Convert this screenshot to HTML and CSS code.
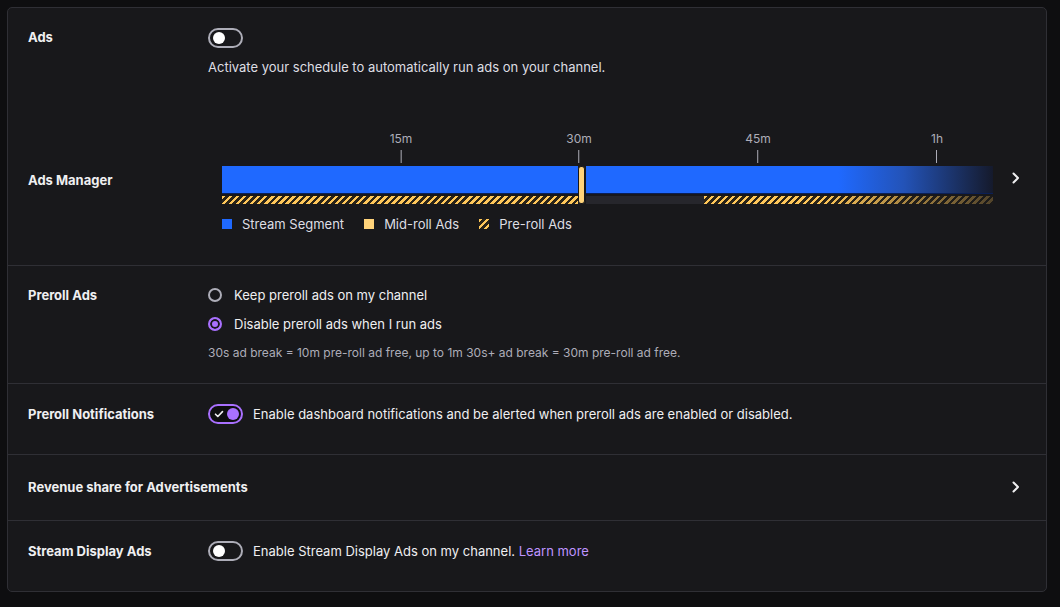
FILE: index.html
```html
<!DOCTYPE html>
<html lang="en">
<head>
    <meta charset="UTF-8">
    <meta name="viewport" content="width=device-width, initial-scale=1.0">
    <title>Ads Settings</title>
    <link rel="stylesheet" href="styles.css">
</head>
<body>
    <div class="panel">
        <div class="row row-ads">
            <div class="sub-row">
                <div class="label">Ads</div>
                <div class="content">
                    <div class="toggle"><span class="knob"></span></div>
                    <div class="desc">Activate your schedule to automatically run ads on your channel.</div>
                </div>
            </div>

            <div class="sub-row manager">
                <div class="label manager-label">Ads Manager</div>
                <div class="timeline">
                    <div class="scale">
                        <div class="tick" style="left: 179px;"><span>15m</span><i></i></div>
                        <div class="tick" style="left: 357px;"><span>30m</span><i></i></div>
                        <div class="tick" style="left: 536px;"><span>45m</span><i></i></div>
                        <div class="tick" style="left: 715px;"><span>1h</span><i></i></div>
                    </div>
                    <div class="track">
                        <div class="segments">
                            <div class="seg seg-a"></div>
                            <div class="seg seg-b"></div>
                        </div>
                        <div class="preroll">
                            <div class="stripes stripes-a"></div>
                            <div class="gap-track"></div>
                            <div class="stripes stripes-b"></div>
                        </div>
                        <div class="midroll"></div>
                    </div>
                    <div class="legend">
                        <div class="legend-item"><span class="swatch blue"></span>Stream Segment</div>
                        <div class="legend-item"><span class="swatch yellow"></span>Mid-roll Ads</div>
                        <div class="legend-item"><span class="swatch striped"></span>Pre-roll Ads</div>
                    </div>
                </div>
                <div class="chevron manager-chevron">
                    <svg width="20" height="20" viewBox="0 0 20 20"><path d="M7.5 5.5l4.5 4.5-4.5 4.5" fill="none" stroke="#efeff1" stroke-width="2" stroke-linecap="round" stroke-linejoin="round"/></svg>
                </div>
            </div>
        </div>

        <div class="row row-preroll">
            <div class="label">Preroll Ads</div>
            <div class="content">
                <div class="radio-group">
                    <div class="radio-item"><span class="radio"></span>Keep preroll ads on my channel</div>
                    <div class="radio-item"><span class="radio checked"></span>Disable preroll ads when I run ads</div>
                </div>
                <div class="note">30s ad break = 10m pre-roll ad free, up to 1m 30s+ ad break = 30m pre-roll ad free.</div>
            </div>
        </div>

        <div class="row row-inline">
            <div class="label">Preroll Notifications</div>
            <div class="content inline">
                <div class="toggle on">
                    <svg class="check" width="10" height="10" viewBox="0 0 10 10"><path d="M1.5 5.2l2.3 2.3 4.7-4.9" fill="none" stroke="#efeff1" stroke-width="1.6" stroke-linecap="round" stroke-linejoin="round"/></svg>
                    <span class="knob"></span>
                </div>
                <span class="text">Enable dashboard notifications and be alerted when preroll ads are enabled or disabled.</span>
            </div>
        </div>

        <div class="row row-link">
            <div class="label wide">Revenue share for Advertisements</div>
            <div class="chevron">
                <svg width="20" height="20" viewBox="0 0 20 20"><path d="M7.5 5.5l4.5 4.5-4.5 4.5" fill="none" stroke="#efeff1" stroke-width="2" stroke-linecap="round" stroke-linejoin="round"/></svg>
            </div>
        </div>

        <div class="row row-inline">
            <div class="label">Stream Display Ads</div>
            <div class="content inline">
                <div class="toggle"><span class="knob"></span></div>
                <span class="text">Enable Stream Display Ads on my channel. <a class="link" href="#">Learn more</a></span>
            </div>
        </div>
    </div>
</body>
</html>
```

FILE: styles.css
```css
* {
    margin: 0;
    padding: 0;
    box-sizing: border-box;
}

body {
    font-family: Inter, 'Noto Sans', sans-serif;
    background: #0e0e10;
    color: #efeff1;
    font-size: 13px;
    line-height: 18px;
    padding: 7px;
    height: 607px;
    overflow: hidden;
}

.panel {
    width: 1040px;
    background: #18181b;
    border: 1px solid #2f2f35;
    border-radius: 5px;
}

.row {
    display: grid;
    grid-template-columns: 180px 1fr;
    padding: 20px 20px 30px;
    border-top: 1px solid #2f2f35;
}

.row:first-child {
    border-top: none;
}

.label {
    font-weight: 700;
    font-size: 13px;
    color: #efeff1;
}

.row-ads {
    display: block;
    padding-bottom: 32px;
}

.sub-row {
    display: grid;
    grid-template-columns: 180px 1fr;
}

.sub-row .label {
    line-height: 19px;
}

.sub-row.manager {
    grid-template-columns: 180px 1fr 20px;
    margin-top: 55px;
}

.manager-label {
    margin-top: 40px;
}

.manager-chevron {
    margin-top: 37px;
}

.desc {
    margin-top: 10px;
    color: #dedee3;
}

/* toggles */
.toggle {
    position: relative;
    width: 35px;
    height: 20px;
    border: 2px solid #adadb8;
    border-radius: 10px;
    flex-shrink: 0;
}

.toggle .knob {
    position: absolute;
    top: 2px;
    left: 3px;
    width: 12px;
    height: 12px;
    border-radius: 50%;
    background: #ffffff;
}

.toggle.on {
    border-color: #a970ff;
    background: #0e0e10;
}

.toggle.on .knob {
    left: auto;
    right: 2px;
    background: #a970ff;
}

.toggle .check {
    position: absolute;
    top: 3px;
    left: 4px;
}

/* timeline */
.timeline {
    padding: 0 13px 0 14px;
}

.scale {
    position: relative;
    height: 35px;
}

.tick {
    position: absolute;
    top: 0;
    transform: translateX(-50%);
    display: flex;
    flex-direction: column;
    align-items: center;
    font-size: 12px;
    line-height: 16px;
    color: #adadb8;
}

.tick i {
    display: block;
    width: 1px;
    height: 13px;
    margin-top: 3px;
    background: #adadb8;
}

.track {
    position: relative;
    height: 38px;
}

.segments {
    display: flex;
    height: 28px;
    gap: 8px;
}

.seg {
    height: 28px;
    background: #1f69ff;
    box-shadow: inset 0 -1px 0 #0b1f55;
}

.seg-a {
    width: 356px;
}

.seg-b {
    flex: 1;
    background: linear-gradient(to right, #1f69ff 0, #1f69ff 62%, #2353b8 78%, #151a2c 100%);
}

.preroll {
    display: flex;
    height: 8px;
    margin-top: 2px;
}

.stripes {
    height: 8px;
    background: repeating-linear-gradient(135deg, #ffc75a 0, #ffc75a 2.5px, #2a2418 2.5px, #2a2418 5px);
}

.stripes-a {
    width: 356px;
}

.gap-track {
    width: 118px;
    margin-left: 8px;
    background: #26262c;
}

.stripes-b {
    flex: 1;
    -webkit-mask-image: linear-gradient(to right, #000 40%, rgba(0,0,0,0.25) 100%);
    mask-image: linear-gradient(to right, #000 40%, rgba(0,0,0,0.25) 100%);
}

.midroll {
    position: absolute;
    top: 0;
    left: 356px;
    width: 7px;
    height: 38px;
    background: #ffd37a;
    border: 1px solid #18181b;
    border-radius: 3px;
}

.legend {
    display: flex;
    gap: 20px;
    margin-top: 11px;
    color: #dedee3;
}

.legend-item {
    display: flex;
    align-items: center;
    gap: 10px;
}

.swatch {
    width: 10px;
    height: 10px;
    display: inline-block;
}

.swatch.blue {
    background: #1f69ff;
}

.swatch.yellow {
    background: #ffd37a;
}

.swatch.striped {
    background: repeating-linear-gradient(135deg, #ffc75a 0, #ffc75a 2.5px, #2a2418 2.5px, #2a2418 5px);
}

.chevron {
    width: 20px;
    height: 20px;
}

.chevron svg {
    display: block;
}

/* preroll radios */
.row-preroll {
    padding-bottom: 22px;
}

.radio-group {
    display: flex;
    flex-direction: column;
    gap: 11px;
}

.radio-item {
    display: flex;
    align-items: center;
    gap: 12px;
    color: #efeff1;
}

.radio {
    width: 14px;
    height: 14px;
    border: 2px solid #adadb8;
    border-radius: 50%;
    flex-shrink: 0;
}

.radio.checked {
    border-color: #a970ff;
    background: #a970ff;
    box-shadow: inset 0 0 0 2px #18181b;
}

.note {
    margin-top: 12px;
    font-size: 12px;
    line-height: 16px;
    color: #adadb8;
}

/* inline toggle rows */
.row-inline {
    align-items: center;
}

.content.inline {
    display: flex;
    align-items: center;
    gap: 10px;
}

.text {
    color: #efeff1;
}

.link {
    color: #bf94ff;
    text-decoration: none;
}

.row-link {
    grid-template-columns: 1fr 20px;
    align-items: center;
    padding: 22px 20px 23px;
}
```
